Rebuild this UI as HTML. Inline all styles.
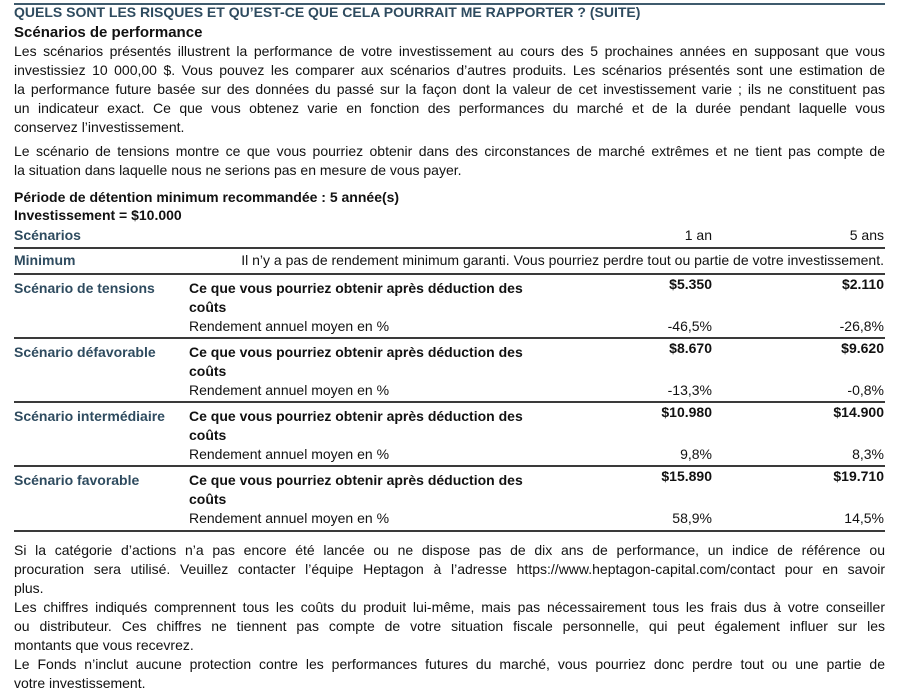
<!DOCTYPE html>
<html><head><meta charset="utf-8"><style>
body{margin:0;width:898px;height:698px;background:#fff;position:relative;overflow:hidden;font-family:"Liberation Sans",Arial,sans-serif;color:#111;font-size:14px;}
.l{position:absolute;left:14px;width:871px;height:19px;line-height:19px;white-space:nowrap;}
.j{text-align:justify;text-align-last:justify;}
.b{font-weight:bold;}
.bl{color:#2e4b5f;font-weight:bold;}
.hr{position:absolute;left:14px;width:871px;height:2px;background:#3a3a3a;}
.a{position:absolute;height:19px;line-height:19px;white-space:nowrap;}
.r1{right:186px;text-align:right;}
.r2{right:14px;text-align:right;}
</style></head><body>
<div style="position:absolute;left:14px;top:3px;width:871px;height:2px;background:#3f5b6d"></div>
<div class="l bl" style="top:3px;font-size:14px">QUELS SONT LES RISQUES ET QU’EST-CE QUE CELA POURRAIT ME RAPPORTER ? (SUITE)</div>
<div class="l b" style="top:23px;font-size:15px">Scénarios de performance</div>
<div class="l j" style="top:42px">Les scénarios présentés illustrent la performance de votre investissement au cours des 5 prochaines années en supposant que vous</div>
<div class="l j" style="top:61px">investissiez 10 000,00 $. Vous pouvez les comparer aux scénarios d’autres produits. Les scénarios présentés sont une estimation de</div>
<div class="l j" style="top:80px">la performance future basée sur des données du passé sur la façon dont la valeur de cet investissement varie ; ils ne constituent pas</div>
<div class="l j" style="top:99px">un indicateur exact. Ce que vous obtenez varie en fonction des performances du marché et de la durée pendant laquelle vous</div>
<div class="l" style="top:118px">conservez l’investissement.</div>
<div class="l j" style="top:142px">Le scénario de tensions montre ce que vous pourriez obtenir dans des circonstances de marché extrêmes et ne tient pas compte de</div>
<div class="l" style="top:161px">la situation dans laquelle nous ne serions pas en mesure de vous payer.</div>
<div class="l b" style="top:188px">Période de détention minimum recommandée : 5 année(s)</div>
<div class="l b" style="top:206px">Investissement = $10.000</div>
<div class="l bl" style="top:226px">Scénarios</div>
<div class="a r1" style="top:226px">1 an</div>
<div class="a r2" style="top:226px">5 ans</div>
<div class="hr" style="top:247px"></div>
<div class="l bl" style="top:251px">Minimum</div>
<div class="a r2" style="top:251px">Il n’y a pas de rendement minimum garanti. Vous pourriez perdre tout ou partie de votre investissement.</div>
<div class="hr" style="top:273px"></div>

<div class="l bl" style="top:279px">Scénario de tensions</div>
<div class="a b" style="left:189px;top:279px">Ce que vous pourriez obtenir après déduction des</div>
<div class="a b" style="left:189px;top:298px">coûts</div>
<div class="a b r1" style="top:275px">$5.350</div>
<div class="a b r2" style="top:275px">$2.110</div>
<div class="a" style="left:189px;top:317px">Rendement annuel moyen en %</div>
<div class="a r1" style="top:317px">-46,5%</div>
<div class="a r2" style="top:317px">-26,8%</div>
<div class="hr" style="top:337px"></div>

<div class="l bl" style="top:343px">Scénario défavorable</div>
<div class="a b" style="left:189px;top:343px">Ce que vous pourriez obtenir après déduction des</div>
<div class="a b" style="left:189px;top:362px">coûts</div>
<div class="a b r1" style="top:339px">$8.670</div>
<div class="a b r2" style="top:339px">$9.620</div>
<div class="a" style="left:189px;top:381px">Rendement annuel moyen en %</div>
<div class="a r1" style="top:381px">-13,3%</div>
<div class="a r2" style="top:381px">-0,8%</div>
<div class="hr" style="top:401px"></div>

<div class="l bl" style="top:407px">Scénario intermédiaire</div>
<div class="a b" style="left:189px;top:407px">Ce que vous pourriez obtenir après déduction des</div>
<div class="a b" style="left:189px;top:426px">coûts</div>
<div class="a b r1" style="top:403px">$10.980</div>
<div class="a b r2" style="top:403px">$14.900</div>
<div class="a" style="left:189px;top:445px">Rendement annuel moyen en %</div>
<div class="a r1" style="top:445px">9,8%</div>
<div class="a r2" style="top:445px">8,3%</div>
<div class="hr" style="top:465px"></div>

<div class="l bl" style="top:471px">Scénario favorable</div>
<div class="a b" style="left:189px;top:471px">Ce que vous pourriez obtenir après déduction des</div>
<div class="a b" style="left:189px;top:490px">coûts</div>
<div class="a b r1" style="top:467px">$15.890</div>
<div class="a b r2" style="top:467px">$19.710</div>
<div class="a" style="left:189px;top:509px">Rendement annuel moyen en %</div>
<div class="a r1" style="top:509px">58,9%</div>
<div class="a r2" style="top:509px">14,5%</div>
<div class="hr" style="top:530px"></div>

<div class="l j" style="top:541px">Si la catégorie d’actions n’a pas encore été lancée ou ne dispose pas de dix ans de performance, un indice de référence ou</div>
<div class="l j" style="top:560px">procuration sera utilisé. Veuillez contacter l’équipe Heptagon à l’adresse https://www.heptagon-capital.com/contact pour en savoir</div>
<div class="l" style="top:579px">plus.</div>
<div class="l j" style="top:598px">Les chiffres indiqués comprennent tous les coûts du produit lui-même, mais pas nécessairement tous les frais dus à votre conseiller</div>
<div class="l j" style="top:617px">ou distributeur. Ces chiffres ne tiennent pas compte de votre situation fiscale personnelle, qui peut également influer sur les</div>
<div class="l" style="top:636px">montants que vous recevrez.</div>
<div class="l j" style="top:655px">Le Fonds n’inclut aucune protection contre les performances futures du marché, vous pourriez donc perdre tout ou une partie de</div>
<div class="l" style="top:674px">votre investissement.</div>
</body></html>
